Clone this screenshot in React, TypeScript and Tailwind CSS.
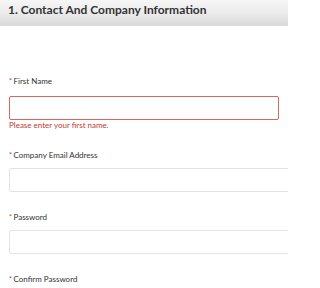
import React from 'react';

const Label: React.FC<{ text: string }> = ({ text }) => (
  <label className="block h-[12px] text-[8px] leading-[12px] text-[#333]">
    <span className="mr-[1.5px] text-[7px] text-[#c23934]">*</span>
    {text}
  </label>
);

const App: React.FC = () => {
  return (
    <div
      className="h-[288px] w-[288px] overflow-hidden bg-white"
      style={{ fontFamily: 'Lato, "Open Sans", sans-serif' }}
    >
      {/* Section header */}
      <div className="h-[26px] bg-gradient-to-b from-[#f6f6f6] via-[#ebebeb] to-[#d9d9d9] px-[8px] pt-[1px]">
        <h2 className="text-[12px] font-bold leading-[18px] text-[#333]">1. Contact And Company Information</h2>
      </div>

      <div className="pl-[9px] pt-[49px]">
        {/* First Name (invalid) */}
        <Label text="First Name" />
        <input
          type="text"
          className="mt-[9px] block h-[24px] w-[270px] rounded-[2px] border-[1.5px] border-[#d06a5e] bg-white outline-none"
        />
        <p className="h-[10px] text-[8px] leading-[10px] text-[#c23934]">Please enter your first name.</p>

        {/* Company Email */}
        <div className="mt-[19px]">
          <Label text="Company Email Address" />
          <input
            type="text"
            className="mt-[7px] block h-[24px] w-[300px] rounded-[2px] border border-[#e3e3e3] bg-white outline-none"
          />
        </div>

        {/* Password */}
        <div className="mt-[19px]">
          <Label text="Password" />
          <input
            type="password"
            className="mt-[7px] block h-[24px] w-[300px] rounded-[2px] border border-[#e3e3e3] bg-white outline-none"
          />
        </div>

        {/* Confirm Password */}
        <div className="mt-[19px]">
          <Label text="Confirm Password" />
          <input
            type="password"
            className="mt-[7px] block h-[24px] w-[300px] rounded-[2px] border border-[#e3e3e3] bg-white outline-none"
          />
        </div>
      </div>
    </div>
  );
};

export default App;
